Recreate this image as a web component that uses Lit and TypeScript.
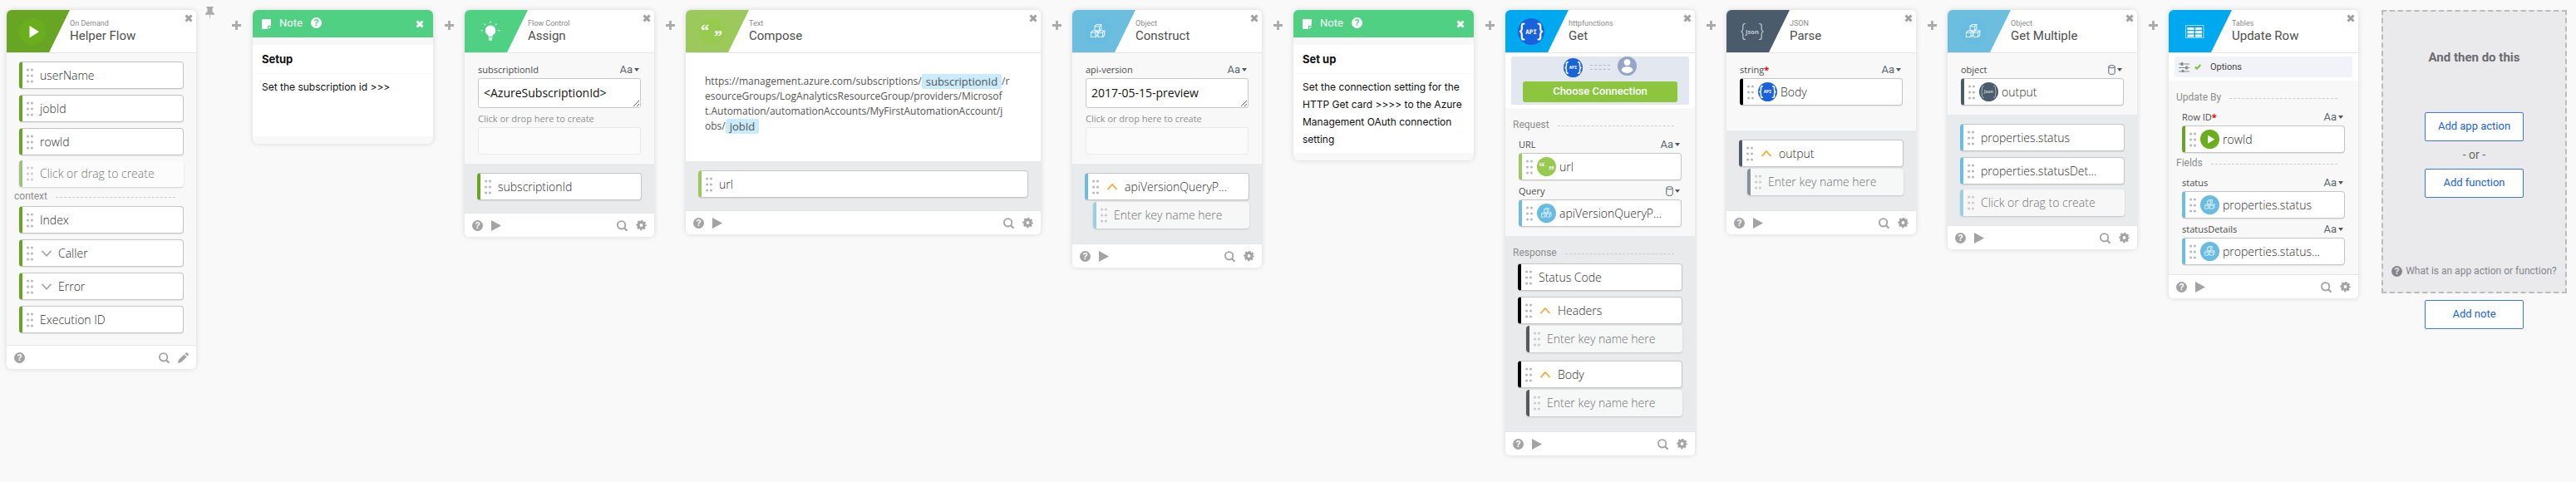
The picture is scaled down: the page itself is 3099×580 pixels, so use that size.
import { LitElement, html, svg, css, nothing, TemplateResult } from "lit";
import { customElement } from "lit/decorators.js";
import { classMap } from "lit/directives/class-map.js";

type Tone = "leaf" | "lime" | "sky" | "black" | "slate";
type Glyph = "play" | "bulb" | "quotes" | "cubes" | "api" | "json" | "table";

interface Chip {
  text: string;
  tone: Tone;
  caret?: "down" | "up";
  glyph?: Glyph;
}

const braces = (stroke: number) => svg`
  <g fill="none" stroke="currentColor" stroke-width=${stroke} stroke-linecap="round" stroke-linejoin="round">
    <path d="M7.5 6.5c-2 0-2.7.8-2.7 2.6v3.6c0 1.9-.6 2.7-2 3.3 1.4.6 2 1.4 2 3.3v3.6c0 1.8.7 2.6 2.7 2.6"/>
    <path d="M24.5 6.5c2 0 2.7.8 2.7 2.6v3.6c0 1.9.6 2.7 2 3.3-1.4.6-2 1.4-2 3.3v3.6c0 1.8-.7 2.6-2.7 2.6"/>
  </g>`;

const cube = (x: number, y: number) => svg`
  <path d="M${x} ${y + 2.2}h5.6v5.3h-5.6zM${x} ${y + 2.2}l2.2-2.2h5.6l-2.2 2.2M${x + 7.8} ${y}v5.3l-2.2 2.2"/>`;

const glyphs: Record<Glyph, unknown> = {
  play: svg`<path d="M12.5 9v14.4L24 16.2z" fill="#fff"/>`,
  bulb: svg`
    <path d="M16 8.5a6.3 6.3 0 0 0-3.3 11.6c.7.5.9 1.200.9 2.2h4.8c0-1 .2-1.7.9-2.2A6.3 6.3 0 0 0 16 8.500z" fill="#fff"/>
    <path d="M13.8 24h4.4M14.3 26h3.4" stroke="#fff" stroke-width="1.3"/>
    <path d="M16 3.5v2.2M8.5 6.5l1.6 1.6M23.5 6.5l-1.6 1.6M4.5 14.6h2.6M24.9 14.6h2.6" stroke="#fff" stroke-width="1.2" opacity=".85"/>`,
  quotes: svg`
    <text x="3" y="22" font-family="Liberation Serif, serif" font-weight="700" font-size="20" fill="#fff">“</text>
    <text x="19" y="29" font-family="Liberation Serif, serif" font-weight="700" font-size="20" fill="#fff">”</text>`,
  cubes: svg`<g fill="none" stroke="#fff" stroke-width="1.1" opacity=".85">${cube(12, 7.5)}${cube(7.5, 15)}${cube(16, 15)}</g>`,
  api: svg`<g color="#fff">${braces(2.2)}
    <text x="16" y="18.5" text-anchor="middle" font-family="DejaVu Sans Mono, monospace" font-weight="700" font-size="7.5" fill="#fff">API</text></g>`,
  json: svg`<g color="#c3cad1">${braces(1.2)}
    <text x="16" y="18.5" text-anchor="middle" font-family="Open Sans, sans-serif" font-weight="700" font-size="7.5" fill="#c3cad1">Json</text></g>`,
  table: svg`
    <rect x="5.5" y="8.5" width="21.5" height="15" fill="none" stroke="#fff" opacity=".6"/>
    <path d="M7.5 11h8v3h-8zM17 11h8v3h-8zM7.5 15.2h8v3h-8zM17 15.2h8v3h-8zM7.5 19.4h8v3h-8zM17 19.4h8v3h-8z" fill="#fff"/>`,
};

const badge = (glyph: Glyph, size: "large" | "small") => html`
  <svg class=${`badge ${size} ${glyph}`} viewBox="0 0 32 32" aria-hidden="true">
    <circle class="disc" cx="16" cy="16" r="16"/>${glyphs[glyph]}
  </svg>`;

const helpIcon = html`
  <svg class="icon" viewBox="0 0 13 13" aria-hidden="true">
    <circle cx="6.5" cy="6.5" r="6.5" fill="currentColor"/>
    <text class="hole" x="6.5" y="10.3" text-anchor="middle" font-family="Liberation Sans, sans-serif" font-weight="700" font-size="10.5">?</text>
  </svg>`;
const playIcon = html`<svg class="icon" viewBox="0 0 13 13" aria-hidden="true"><path d="M1 0l12 6.500L1 13z" fill="currentColor"/></svg>`;
const searchIcon = html`
  <svg class="icon" viewBox="0 0 13 13" aria-hidden="true" fill="none" stroke="currentColor" stroke-width="1.8">
    <circle cx="5.6" cy="5.8" r="4.7"/><path d="M9 9.2l3.5 3.5" stroke-width="2.2"/>
  </svg>`;
const gearIcon = html`
  <svg class="icon" viewBox="0 0 13 13" aria-hidden="true" fill="none" stroke="currentColor">
    <circle cx="6.5" cy="6" r="3.5" stroke-width="3.2"/>
    <circle cx="6.5" cy="6" r="5.3" stroke-width="1.9" stroke-dasharray="2.400 1.763" stroke-dashoffset="1.2"/>
  </svg>`;
const pencilIcon = html`
  <svg class="icon" viewBox="0 0 13 13" aria-hidden="true" fill="currentColor">
    <path d="M0 13l.9-3.9 6.7-6.700 3 3L3.9 12.1zM8.4 1.6l1.1-1.1c.5-.5 1.2-.5 1.7 0l1.3 1.300c.5.5.5 1.2 0 1.7l-1.1 1.1z"/>
  </svg>`;
const crossIcon = html`
  <svg class="cross" viewBox="0 0 10 10" aria-hidden="true"><path d="M1.5 1.5l7 7M8.5 1.5l-7 7" stroke="currentColor" stroke-width="3"/></svg>`;
const plusIcon = html`
  <svg class="plus" viewBox="0 0 11 11" aria-hidden="true"><path d="M5.5 0v11M0 5.5h11" stroke="currentColor" stroke-width="2.8"/></svg>`;
const pinIcon = html`
  <svg class="pin" viewBox="0 0 11 16" aria-hidden="true" fill="currentColor">
    <path d="M1.5 0h8v1.8h-1v4.4c1.5.6 2.5 1.9 2.5 3.6H0c0-1.7 1-3 2.5-3.6V1.8h-1z"/><path d="M4.9 9.8h1.2L5.5 16z"/>
  </svg>`;
const grip = html`
  <svg class="grip" viewBox="0 0 8 18" aria-hidden="true" fill="#bababa">
    ${[2, 9, 16].map((y) => svg`<circle cx="1.6" cy=${y} r="1.6"/><circle cx="6.4" cy=${y} r="1.6"/>`)}
  </svg>`;
const caretIcon = (dir: "down" | "up") => html`
  <svg class=${`caret ${dir}`} viewBox="0 0 12 8" aria-hidden="true" fill="none" stroke="currentColor" stroke-width="1.8">
    <path d=${dir === "down" ? "M.6.8L6 6.8 11.4.8" : "M.6 7L6 1l5.4 6"}/>
  </svg>`;

@customElement("app-root")
export class AppRoot extends LitElement {
  static styles = css`
    :host {
      display: block;
      min-height: 100vh;
      background: #f9f9f9;
      color: #555;
      font-family: Roboto, sans-serif;
      font-size: 13px;
    }
    * { box-sizing: border-box; }
    button, input, textarea { font: inherit; color: inherit; margin: 0; }
    button { background: none; border: 0; padding: 0; cursor: pointer; }
    svg { display: block; flex: none; }

    .canvas {
      display: flex;
      align-items: flex-start;
      padding: 12px 11px 30px 8px;
    }
    .card, .note {
      flex: 1 0 228px;
      border-radius: 6px;
      overflow: hidden;
      background: #fff;
      box-shadow: 0 0 6px rgba(0, 0, 0, 0.14);
    }
    .card.wide { flex-basis: 427px; }
    .note { flex-basis: 217px; background: #f8f8f8; }
    .link { flex: none; width: 38px; color: #aaa; padding-top: 13px; display: flex; justify-content: center; }
    .link.first { width: 68px; padding-left: 11px; padding-top: 0; justify-content: flex-start; align-items: flex-start; gap: 21px; }
    .link.first .pin { margin-top: -4px; }
    .link.first .add { margin-top: 13px; }
    .plus { width: 11px; height: 11px; }
    .pin { width: 11px; height: 16px; }

    .head {
      display: flex;
      height: 52px;
      border-bottom: 1px solid #e4e4e4;
      background: #fff;
    }
    .flag {
      width: 76px;
      padding: 10px 0 0 15px;
      clip-path: polygon(0 0, 100% 0, 51px 100%, 0 100%);
    }
    .flag.play { background: #69a524; }
    .flag.bulb { background: #4fd083; }
    .flag.quotes { background: #9cc95c; }
    .flag.cubes { background: #6cbedf; }
    .flag.api, .flag.table { background: #00a9ef; }
    .flag.json { background: #4a5b6b; }
    .names { flex: 1; padding-top: 10px; }
    .kind { font-size: 9px; line-height: 12px; color: #8a8a8a; }
    .title { margin: 0; font-size: 15px; line-height: 18px; font-weight: 400; color: #4f4f4f; }
    .close { align-self: flex-start; padding: 5px 4px; color: #a0a0a0; }
    .cross { width: 10px; height: 10px; }

    .badge.large { width: 32px; height: 32px; }
    .badge.small { width: 23px; height: 23px; }
    .disc { fill: none; }
    .badge.play .disc { fill: #6aae1d; }
    .badge.quotes .disc { fill: #97cb4f; }
    .badge.cubes .disc { fill: #67bce0; }
    .badge.json .disc { fill: #4a5b6b; }
    .badge.api .disc { fill: #1a61dc; }

    .body { background: #f8f8f8; padding: 7px 16px 11px; }
    .body.tall { padding-bottom: 30px; }
    .body.list { padding: 10px 15px 14px; }
    .output { background: #e9eaec; padding: 11px 15px 15px; }
    .output.sectioned { padding-top: 0; }
    .body.sectioned { padding-top: 0; }
    .stack { display: flex; flex-direction: column; gap: 7px; margin: 0; padding: 0; list-style: none; }

    .chip {
      display: flex;
      align-items: center;
      width: 100%;
      height: 33px;
      border: 1px solid #c6c6c6;
      border-left: 4px solid;
      border-radius: 4px;
      background: #fff;
      padding-left: 5px;
      text-align: left;
      font-family: "Open Sans", sans-serif;
      font-weight: 300;
      font-size: 14px;
      line-height: 20px;
      color: #2e2e2e;
      box-shadow: 0 1px 1px rgba(0, 0, 0, 0.08);
      white-space: nowrap;
    }
    .chip.leaf { border-left-color: #69a524; }
    .chip.lime { border-left-color: #9cc95c; }
    .chip.sky { border-left-color: #6cbedf; }
    .chip.black { border-left-color: #000; }
    .chip.slate { border-left-color: #4a5b6b; }
    .grip { width: 8px; height: 18px; margin-right: 8px; }
    .chip .badge { margin: 0 4px 0 -3px; }
    .caret { width: 12px; height: 8px; margin: 0 8px 0 2px; color: #a8a8a8; }
    .caret.up { color: #f7a93b; margin-right: 9px; }

    .ghost {
      height: 32px;
      border-width: 0 0 0 4px;
      opacity: 0.62;
      box-shadow: 0 1px 2px rgba(0, 0, 0, 0.25);
      color: #222;
    }
    .ghost input {
      flex: 1;
      min-width: 0;
      border: 0;
      outline: 0;
      padding: 0;
      background: none;
    }
    .ghost input::placeholder { color: #222; opacity: 1; }
    .key { width: auto; margin: -5px 0 3px 10px; }
    .create { margin-top: -1px; margin-bottom: -4px; }
    .list .create { margin-bottom: 0; }

    .section {
      display: flex;
      align-items: center;
      height: 23px;
      margin: 0 9px 0 -7px;
      gap: 10px;
      font-size: 12px;
      font-weight: 400;
      color: #8c8c8c;
    }
    .section::after { content: ""; flex: 1; margin-top: 4px; border-top: 1px dashed #ccc; }
    .section.lead { height: 31px; padding-top: 8px; }
    .output .section { margin: 0 10px 2px -6px; }
    .list .section { margin: 0 10px 0 -6px; padding-bottom: 2px; }

    .field-head {
      display: flex;
      align-items: center;
      justify-content: space-between;
      height: 23px;
      padding: 2px 2px 0 0;
    }
    .label { font-family: "Open Sans", sans-serif; font-size: 11px; line-height: 16px; color: #4c4c4c; }
    .label.hint { color: #8f8f8f; }
    .req { color: #f00; font-weight: 700; }
    .type { display: flex; align-items: center; gap: 2px; color: #5a6670; font-size: 13px; line-height: 16px; }
    .type::after { content: ""; border: 3px solid transparent; border-top: 4px solid #555; border-bottom: 0; }
    .jar { width: 9px; height: 12px; }

    textarea, .drop {
      display: block;
      width: 100%;
      border: 1px solid #c8c8c8;
      border-radius: 3px;
      background: #fff;
    }
    textarea {
      height: 36px;
      padding: 7px 6px;
      resize: vertical;
      overflow: hidden;
      font-family: "Open Sans", sans-serif;
      font-size: 14px;
      line-height: 20px;
      color: #111;
      outline: 0;
    }
    .drop { height: 33px; border-color: #e9e9e9; background: #fbfbfb; outline: 0; padding: 0 6px; }

    .compose {
      min-height: 130px;
      padding: 25px 23px;
      font-family: "Open Sans", sans-serif;
      font-size: 12px;
      line-height: 18px;
      color: #555;
      white-space: nowrap;
      outline: 0;
    }
    .pill {
      display: inline-block;
      height: 18px;
      line-height: 18px;
      padding: 0 5px;
      border-radius: 2px;
      background: #c9ebfb;
      font-size: 13px;
      vertical-align: bottom;
    }

    .foot {
      display: flex;
      align-items: center;
      gap: 9px;
      height: 29px;
      padding: 0 9px;
      border-top: 1px solid #e6e6e6;
      background: #fff;
      color: #a3a3a3;
    }
    .foot .right { display: flex; align-items: center; gap: 10px; margin-left: auto; }
    .icon { width: 13px; height: 13px; }
    .hole { fill: #fff; }

    .connect { background: #fff; padding: 4px 7px; height: 66px; }
    .panel { height: 58px; background: #e3e7ef; border-radius: 3px; padding: 0 14px 3px; display: flex; flex-direction: column; justify-content: space-between; align-items: center; }
    .pair { display: flex; align-items: center; gap: 9px; height: 26px; }
    .wire { width: 24px; height: 6px; border: 1px dashed #a9b9d8; border-width: 1px 0; }
    .user { width: 23px; height: 23px; margin-top: -4px; }
    .choose {
      width: 100%;
      height: 25px;
      border-radius: 3px;
      background: #8cc63f;
      color: #fff;
      font-weight: 500;
      padding-bottom: 2px;
    }
    .options-wrap { background: #fff; padding: 4px 7px; height: 33px; }
    .options {
      display: flex;
      align-items: center;
      width: 100%;
      height: 25px;
      padding: 0 5px;
      border-radius: 3px;
      background: #f2f3f8;
      font-size: 11px;
      color: #444;
    }
    .sliders { width: 13px; height: 12px; margin-right: 6px; }
    .tick { width: 8px; height: 7px; margin-right: 11px; }

    .note-head {
      display: flex;
      align-items: center;
      height: 33px;
      padding: 0 9px 0 11px;
      background: #4fd083;
      color: #fff;
      font-size: 13px;
    }
    .note-head .hole { fill: #4fd083; }
    .sheet { width: 11px; height: 12px; margin-right: 10px; }
    .note-name { margin: 0 10px 2px 0; font: inherit; }
    .note-help { margin-bottom: 2px; }
    .note-head .x { margin-left: auto; padding: 2px; }
    .note-sheet {
      margin: 9px 0;
      background: #fff;
      color: #111;
      font-family: Inter, sans-serif;
      font-size: 12px;
      line-height: 21px;
    }
    .note-title { margin: 0; padding: 7px 11px 6px; font-size: 13px; font-weight: 700; border-bottom: 1px solid #f8f8f8; }
    .note-text { margin: 0; padding: 5px 11px 6px; min-height: 75px; white-space: pre-line; }

    .next { flex: 1 0 223px; margin-left: 28px; display: flex; flex-direction: column; align-items: center; gap: 8px; }
    .zone {
      width: 100%;
      height: 341px;
      display: flex;
      flex-direction: column;
      align-items: center;
      padding: 45px 0 18px;
      border: 2px dashed #bbb;
      background: #eaeaec;
    }
    .zone-title { margin: 0 0 56px; font-size: 15px; line-height: 20px; font-weight: 700; color: #6a6a72; }
    .or { line-height: 33px; font-size: 14px; color: #666; }
    .outline {
      width: 119px;
      height: 35px;
      border: 1px solid #3b78e0;
      border-radius: 2px;
      background: #fff;
      color: #1a61dc;
      padding-bottom: 2px;
    }
    .what { display: flex; align-items: center; gap: 4px; margin-top: auto; font-size: 12px; color: #85858d; text-decoration: none; }
    .zone .hole { fill: #eaeaec; }
  `;

  private chip(c: Chip): TemplateResult {
    const inner = html`${grip}${c.glyph ? badge(c.glyph, "small") : nothing}${c.caret ? caretIcon(c.caret) : nothing}<span>${c.text}</span>`;
    return c.caret
      ? html`<button class=${`chip ${c.tone}`} aria-expanded=${c.caret === "up" ? "true" : "false"}>${inner}</button>`
      : html`<div class=${`chip ${c.tone}`} draggable="true">${inner}</div>`;
  }

  private create(tone: Tone) {
    return html`<button class=${`chip ghost create ${tone}`}>${grip}<span>Click or drag to create</span></button>`;
  }

  private key(tone: Tone, owner: string) {
    return html`<div class=${`chip ghost key ${tone}`}>${grip}<input placeholder="Enter key name here" aria-label=${`Key name in ${owner}`}></div>`;
  }

  private typeButton(kind: "text" | "object") {
    return html`<button class="type" aria-label=${`Input type: ${kind}`}>${kind === "text"
      ? "Aa"
      : html`<svg class="jar" viewBox="0 0 9 12" fill="none" stroke="currentColor"><ellipse cx="4.5" cy="2.2" rx="3.7" ry="1.6"/><path d="M.8 2.2v7.6c0 .9 1.6 1.6 3.7 1.6s3.7-.7 3.7-1.6V2.2"/></svg>`}</button>`;
  }

  private field(label: string, kind: "text" | "object", chip: Chip, required = false) {
    return html`
      <div class="field-head"><span class="label">${label}${required ? html`<span class="req">*</span>` : nothing}</span>${this.typeButton(kind)}</div>
      ${this.chip(chip)}`;
  }

  private entry(id: string, label: string, value: string) {
    return html`
      <div class="field-head"><label class="label" for=${id}>${label}</label>${this.typeButton("text")}</div>
      <textarea id=${id} .value=${value}></textarea>
      <div class="field-head"><label class="label hint" for=${`${id}-new`}>Click or drop here to create</label></div>
      <input class="drop" id=${`${id}-new`}>`;
  }

  private card(glyph: Glyph, kind: string, title: string, content: TemplateResult, opts: { wide?: boolean; editable?: boolean } = {}) {
    return html`
      <article class=${classMap({ card: true, wide: !!opts.wide })}>
        <header class="head">
          <div class=${`flag ${glyph}`}>${badge(glyph, "large")}</div>
          <div class="names"><div class="kind">${kind}</div><h2 class="title">${title}</h2></div>
          <button class="close" aria-label="Remove card">${crossIcon}</button>
        </header>
        ${content}
        <footer class="foot">
          <button aria-label="Help">${helpIcon}</button>
          ${opts.editable ? nothing : html`<button aria-label="Run card">${playIcon}</button>`}
          <div class="right">
            <button aria-label="Search">${searchIcon}</button>
            ${opts.editable ? html`<button aria-label="Edit">${pencilIcon}</button>` : html`<button aria-label="Settings">${gearIcon}</button>`}
          </div>
        </footer>
      </article>`;
  }

  private note(title: string, text: string) {
    return html`
      <article class="note">
        <header class="note-head">
          <svg class="sheet" viewBox="0 0 11 12" aria-hidden="true" fill="#fff"><path d="M0 0h11v8H7v4H0z"/><path d="M8 9h3l-3 3z"/></svg>
          <h2 class="note-name">Note</h2>
          <button class="note-help" aria-label="Help">${helpIcon}</button>
          <button class="x" aria-label="Remove note">${crossIcon}</button>
        </header>
        <div class="note-sheet">
          <h3 class="note-title">${title}</h3>
          <p class="note-text">${text}</p>
        </div>
      </article>`;
  }

  private link() {
    return html`<div class="link"><button aria-label="Insert card">${plusIcon}</button></div>`;
  }

  render() {
    return html`
      <main class="canvas">
        ${this.card("play", "On Demand", "Helper Flow", html`
          <div class="body list">
            <div class="stack">
              ${["userName", "jobId", "rowId"].map((text) => this.chip({ text, tone: "leaf" }))}
              ${this.create("leaf")}
            </div>
            <div class="section">context</div>
            <div class="stack">
              ${this.chip({ text: "Index", tone: "leaf" })}
              ${this.chip({ text: "Caller", tone: "leaf", caret: "down" })}
              ${this.chip({ text: "Error", tone: "leaf", caret: "down" })}
              ${this.chip({ text: "Execution ID", tone: "leaf" })}
            </div>
          </div>`, { editable: true })}
        <div class="link first">
          <button aria-label="Pin card">${pinIcon}</button>
          <button class="add" aria-label="Insert card">${plusIcon}</button>
        </div>
        ${this.note("Setup", "Set the subscription id >>>")}
        ${this.link()}
        ${this.card("bulb", "Flow Control", "Assign", html`
          <div class="body">${this.entry("subscription", "subscriptionId", "<AzureSubscriptionId>")}</div>
          <div class="output">${this.chip({ text: "subscriptionId", tone: "leaf" })}</div>`)}
        ${this.link()}
        ${this.card("quotes", "Text", "Compose", html`
          <div class="compose" role="textbox" aria-label="Text to compose" contenteditable="true">https://management.azure.com/subscriptions/<span class="pill">subscriptionId</span>/r<br>esourceGroups/LogAnalyticsResourceGroup/providers/Microsof<br>t.Automation/automationAccounts/MyFirstAutomationAccount/j<br>obs/<span class="pill">jobId</span></div>
          <div class="output">${this.chip({ text: "url", tone: "lime" })}</div>`, { wide: true })}
        ${this.link()}
        ${this.card("cubes", "Object", "Construct", html`
          <div class="body">${this.entry("api-version", "api-version", "2017-05-15-preview")}</div>
          <div class="output"><div class="stack">
            ${this.chip({ text: "apiVersionQueryP...", tone: "sky", caret: "up" })}
            ${this.key("sky", "apiVersionQueryP...")}
          </div></div>`)}
        ${this.link()}
        ${this.note("Set up", "Set the connection setting for the\nHTTP Get card >>>> to the Azure\nManagement OAuth connection\nsetting")}
        ${this.link()}
        ${this.card("api", "httpfunctions", "Get", html`
          <div class="connect"><div class="panel">
            <div class="pair">
              ${badge("api", "small")}
              <div class="wire"></div>
              <svg class="user" viewBox="0 0 24 24" aria-hidden="true"><circle cx="12" cy="12" r="12" fill="#93a5c9"/><circle cx="12" cy="7.5" r="4" fill="#fff"/><path d="M4.8 17.5c0-3.5 3.5-4.7 7.2-4.7s7.2 1.2 7.2 4.7c-1.5 2-4.2 3.3-7.2 3.3s-5.7-1.3-7.2-3.3z" fill="#fff"/></svg>
            </div>
            <button class="choose">Choose Connection</button>
          </div></div>
          <div class="body sectioned">
            <div class="section lead">Request</div>
            ${this.field("URL", "text", { text: "url", tone: "lime", glyph: "quotes" })}
            ${this.field("Query", "object", { text: "apiVersionQueryP...", tone: "sky", glyph: "cubes" })}
          </div>
          <div class="output sectioned">
            <div class="section lead">Response</div>
            <div class="stack">
              ${this.chip({ text: "Status Code", tone: "black" })}
              ${this.chip({ text: "Headers", tone: "black", caret: "up" })}
              ${this.key("black", "Headers")}
              ${this.chip({ text: "Body", tone: "black", caret: "up" })}
              ${this.key("black", "Body")}
            </div>
          </div>`)}
        ${this.link()}
        ${this.card("json", "JSON", "Parse", html`
          <div class="body tall">${this.field("string", "text", { text: "Body", tone: "black", glyph: "api" }, true)}</div>
          <div class="output"><div class="stack">
            ${this.chip({ text: "output", tone: "slate", caret: "up" })}
            ${this.key("slate", "output")}
          </div></div>`)}
        ${this.link()}
        ${this.card("cubes", "Object", "Get Multiple", html`
          <div class="body">${this.field("object", "object", { text: "output", tone: "slate", glyph: "json" })}</div>
          <div class="output"><div class="stack">
            ${this.chip({ text: "properties.status", tone: "sky" })}
            ${this.chip({ text: "properties.statusDet...", tone: "sky" })}
            ${this.create("sky")}
          </div></div>`)}
        ${this.link()}
        ${this.card("table", "Tables", "Update Row", html`
          <div class="options-wrap"><button class="options">
            <svg class="sliders" viewBox="0 0 13 12" aria-hidden="true" stroke="#888"><path d="M0 2h13M0 6.5h13M0 11h13"/><path d="M4 0v4M9.5 4.5v4M5 9v4" stroke-width="2.6"/></svg>
            <svg class="tick" viewBox="0 0 8 7" aria-hidden="true" fill="none" stroke="#7ac02a" stroke-width="2"><path d="M.8 3.5L3 5.7 7.3 1"/></svg>
            Options
          </button></div>
          <div class="body sectioned">
            <div class="section lead">Update By</div>
            ${this.field("Row ID", "text", { text: "rowId", tone: "leaf", glyph: "play" }, true)}
            <div class="section">Fields</div>
            ${this.field("status", "text", { text: "properties.status", tone: "sky", glyph: "cubes" })}
            ${this.field("statusDetails", "text", { text: "properties.status...", tone: "sky", glyph: "cubes" })}
          </div>`)}
        <section class="next">
          <div class="zone">
            <h2 class="zone-title">And then do this</h2>
            <button class="outline">Add app action</button>
            <span class="or">- or -</span>
            <button class="outline">Add function</button>
            <a class="what" href="#help">${helpIcon}What is an app action or function?</a>
          </div>
          <button class="outline">Add note</button>
        </section>
      </main>`;
  }
}
